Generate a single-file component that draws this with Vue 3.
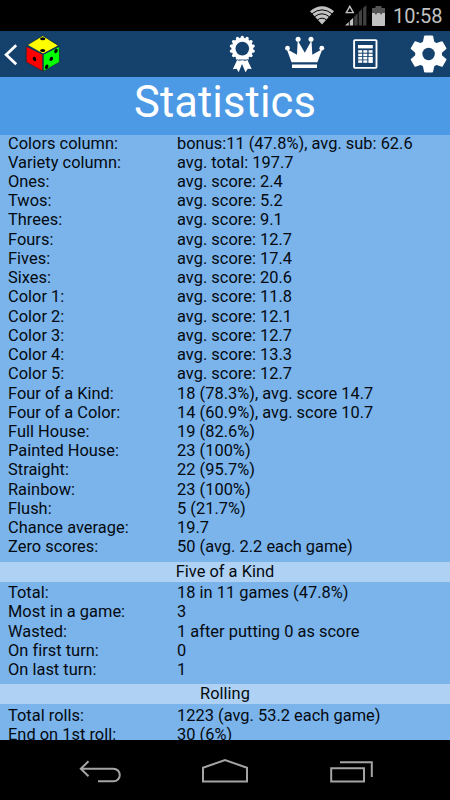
<script setup>
const sections = [
  {
    title: '',
    rows: [
      ['Colors column:', 'bonus:11 (47.8%), avg. sub: 62.6'],
      ['Variety column:', 'avg. total: 197.7'],
      ['Ones:', 'avg. score: 2.4'],
      ['Twos:', 'avg. score: 5.2'],
      ['Threes:', 'avg. score: 9.1'],
      ['Fours:', 'avg. score: 12.7'],
      ['Fives:', 'avg. score: 17.4'],
      ['Sixes:', 'avg. score: 20.6'],
      ['Color 1:', 'avg. score: 11.8'],
      ['Color 2:', 'avg. score: 12.1'],
      ['Color 3:', 'avg. score: 12.7'],
      ['Color 4:', 'avg. score: 13.3'],
      ['Color 5:', 'avg. score: 12.7'],
      ['Four of a Kind:', '18 (78.3%), avg. score 14.7'],
      ['Four of a Color:', '14 (60.9%), avg. score 10.7'],
      ['Full House:', '19 (82.6%)'],
      ['Painted House:', '23 (100%)'],
      ['Straight:', '22 (95.7%)'],
      ['Rainbow:', '23 (100%)'],
      ['Flush:', '5 (21.7%)'],
      ['Chance average:', '19.7'],
      ['Zero scores:', '50 (avg. 2.2 each game)'],
    ],
  },
  {
    title: 'Five of a Kind',
    rows: [
      ['Total:', '18 in 11 games (47.8%)'],
      ['Most in a game:', '3'],
      ['Wasted:', '1 after putting 0 as score'],
      ['On first turn:', '0'],
      ['On last turn:', '1'],
    ],
  },
  {
    title: 'Rolling',
    rows: [
      ['Total rolls:', '1223 (avg. 53.2 each game)'],
      ['End on 1st roll:', '30 (6%)'],
    ],
  },
]

const angles = (n) => Array.from({ length: n }, (_, i) => (i * 360) / n)
</script>

<template>
  <div class="screen">
    <div class="status">
      <svg class="wifi" width="24" height="19" viewBox="0 0 24 19">
        <path d="M0 5.2Q12-4.6 24 5.2L12 18.5Z" fill="#c2c2c2" />
        <path d="M1.7 7.9Q12-.2 22.3 7.9M4.4 10.9Q12 4.7 19.6 10.9M7.4 14Q12 10.3 16.6 14" fill="none" stroke="#000" stroke-width="1" />
      </svg>
      <svg class="signal" width="22" height="21" viewBox="0 0 22 21">
        <path d="M4.8 1.3L8.3 7.6H1.3Z" fill="none" stroke="#c2c2c2" stroke-width="1.4" />
        <path d="M0 20.5L3.8 17V20.5ZM4.8 16L8.2 12.7V20.5H4.8Z" fill="#c2c2c2" />
        <path d="M9.3 11.6L12.6 8.3V20.5H9.3ZM13.7 7.2L17 4V20.5H13.7ZM18.1 2.9L21.4 0V20.5H18.1Z" fill="#414141" />
      </svg>
      <svg class="battery" width="13" height="20" viewBox="0 0 13 20">
        <path d="M3.5 0H9.5V2H13V19Q13 20 12 20H1Q0 20 0 19V2H3.5Z" fill="#555" />
        <path d="M0 7H2.6L4 9L5.2 7H7.8L9 9L10.4 7H13V19Q13 20 12 20H1Q0 20 0 19Z" fill="#c2c2c2" />
      </svg>
      <span class="clock">10:58</span>
    </div>

    <div class="toolbar">
      <svg width="225" height="46" viewBox="0 31 225 46">
        <path d="M16.2 45.2L6.2 54.7L16.2 64.2" fill="none" stroke="#fff" stroke-width="2.8" />
        <path d="M42.7 35.7L58 45.4L43 53.6L27.7 44.8Z" fill="#ff0" />
        <path d="M26.2 46.8L42.4 54.8V71.3L26.2 62Z" fill="#f00" />
        <path d="M43.6 54.8L59.4 46.8V62.3L43.6 71.3Z" fill="#0f0" />
        <path d="M42.7 35.7L58.2 45.2L59.4 46.8V62.3L43 71.3L26.2 62V46.8L27.7 44.8ZM27 46L43 54.3L59 46M43 54.3V71" fill="none" stroke="#102a32" stroke-width=".7" />
        <ellipse cx="42.7" cy="38.7" rx="2.6" ry="1.5" /><ellipse cx="42.7" cy="50.4" rx="2.6" ry="1.5" />
        <ellipse cx="34.5" cy="59" rx="1.6" ry="2.3" transform="rotate(-30 34.5 59)" />
        <ellipse cx="56" cy="51" rx="1.6" ry="2.3" transform="rotate(30 56 51)" />
        <ellipse cx="51.3" cy="58.9" rx="1.6" ry="2.3" transform="rotate(30 51.3 58.9)" />
        <ellipse cx="46.7" cy="66.8" rx="1.6" ry="2.3" transform="rotate(30 46.7 66.8)" />
      </svg>
      <svg width="225" height="46" viewBox="225 31 225 46">
        <g fill="#fff">
          <path d="M237.4 59.5L232.8 69.3L236.6 68.7L238.7 72.3L242 64L245.5 72.3L247.8 68.7L251.7 69.1L247.2 59.5Z" />
          <circle v-for="a in angles(14)" :key="'r' + a" cx="242.3" cy="37.5" r="1.7" :transform="`rotate(${a} 242.3 48.6)`" />
          <circle cx="242.3" cy="48.6" r="10.9" />
        </g>
        <circle cx="242.3" cy="48.6" r="6.8" fill="#15416d" />
        <path d="M236.5 59.4Q239.5 61.7 242.2 59.7Q245 61.7 248 59.4" fill="none" stroke="#15416d" stroke-width=".8" />
        <g fill="#fff">
          <path d="M291.5 62.3L286.7 49L297 54.7L297.7 40.5L304.8 52.7L311.5 40.5L312.3 54.7L322.4 49L317.4 62.3ZM292 64.5H317V68H292Z" />
          <circle cx="287.5" cy="48.2" r="2.4" /><circle cx="298.1" cy="39.2" r="2.5" />
          <circle cx="311" cy="39.2" r="2.5" /><circle cx="321.8" cy="48.2" r="2.4" />
        </g>
        <rect x="354.1" y="40.1" width="22.4" height="27.8" rx=".8" fill="none" stroke="#fff" stroke-width="1.9" />
        <g fill="#fff">
          <rect x="358" y="45" width="14.8" height="3.4" />
          <template v-for="y in [50.2, 53.7, 57, 60.3]" :key="y">
            <rect v-for="x in [358.2, 363.3, 368.6]" :key="x" :x="x" :y="y" width="4" height="2.5" />
          </template>
          <path d="M368.6 57H372.6V62.8H368.6Z" />
        </g>
        <g fill="#fff">
          <circle cx="428.6" cy="54" r="13.4" />
          <path v-for="a in angles(6)" :key="'g' + a" d="M422.7 43L424.1 36.2Q424.3 35.6 425 35.6H432.2Q432.9 35.6 433.1 36.2L434.5 43Z" :transform="`rotate(${a} 428.6 54)`" />
        </g>
        <circle cx="428.6" cy="54" r="6.2" fill="#15416d" />
      </svg>
    </div>

    <h1>Statistics</h1>

    <main>
      <section v-for="section in sections" :key="section.title">
        <h2 v-if="section.title">{{ section.title }}</h2>
        <div v-for="row in section.rows" :key="row[0]" class="row">
          <span>{{ row[0] }}</span><span>{{ row[1] }}</span>
        </div>
      </section>
    </main>

    <nav>
      <svg width="450" height="60" viewBox="0 740 450 60" fill="none" stroke="#a4a4a4" stroke-width="2">
        <path d="M80.5 768.7H113.5A6 6 0 0 1 113.5 781.3H98M88.5 761.3L80.8 768.7L88.5 776.2" />
        <path d="M203 767.8L225 760L247 767.8V781.5H203Z" />
        <path d="M331.2 768.2H364V781.5H331.2ZM340 762.2H371.8V777" />
      </svg>
    </nav>
  </div>
</template>

<style>
body {
  margin: 0;
  background: #000;
}
</style>

<style scoped>
.screen {
  display: flex;
  flex-direction: column;
  width: 450px;
  height: 800px;
  overflow: hidden;
  background: #000;
  font-family: Roboto, sans-serif;
}
.status {
  display: flex;
  flex: none;
  align-items: center;
  height: 31px;
  padding-right: 7px;
  justify-content: flex-end;
  box-sizing: border-box;
}
.wifi { margin-right: 11px; }
.signal { margin-right: 5px; }
.battery { margin-right: 8px; }
.clock {
  width: 50px;
  color: #c2c2c2;
  font-size: 20px;
  line-height: 31px;
  padding-top: 2px;
  letter-spacing: -0.1px;
  white-space: nowrap;
}
.toolbar {
  display: flex;
  flex: none;
  height: 46px;
  background: #15416d;
}
h1 {
  flex: none;
  height: 58px;
  margin: 0;
  background: #4c99e5;
  color: #fff;
  font-size: 43.5px;
  font-weight: 400;
  line-height: 52px;
  letter-spacing: 0.1px;
  text-align: center;
}
main {
  flex: none;
  height: 605px;
  overflow: hidden;
  background: #7bb3eb;
  color: #030a10;
  font-size: 16.4px;
  letter-spacing: 0.02px;
  white-space: nowrap;
}
section:first-child { margin-top: -1.5px; }
.row {
  display: grid;
  grid-template-columns: 169px 1fr;
  height: 19.24px;
  padding-left: 8px;
  line-height: 19.24px;
}
h2 {
  height: 20px;
  margin: 5.2px 0 1.2px;
  background: #afd1f3;
  font-size: inherit;
  font-weight: 400;
  line-height: 20px;
  text-align: center;
}
nav {
  flex: none;
  height: 60px;
}
nav svg { display: block; }
</style>
